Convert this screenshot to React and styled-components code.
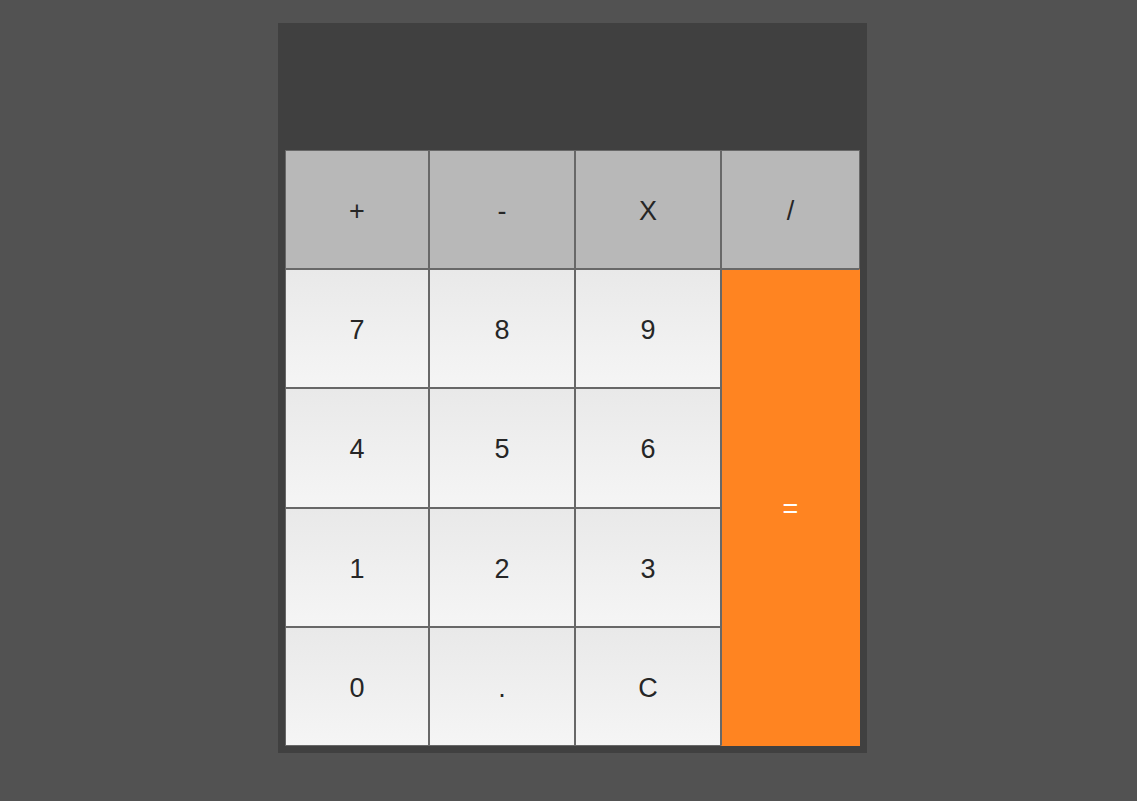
import React from 'react'
import styled, { createGlobalStyle } from 'styled-components'

const GlobalStyle = createGlobalStyle`
  html, body {
    margin: 0;
    padding: 0;
    background: #525252;
    height: 100%;
  }
  body {
    font-family: "Liberation Sans", Arial, sans-serif;
  }
`

const Page = styled.div`
  min-height: 801px;
  padding: 23px 0 0 278px;
  box-sizing: border-box;
`

const Calculator = styled.div`
  width: 589px;
  background: #404040;
  padding: 0 7px 7px;
  box-sizing: border-box;
`

const Display = styled.div`
  height: 127px;
  color: #fff;
  font-size: 40px;
  text-align: right;
`

const Keys = styled.div`
  display: grid;
  grid-template-columns: 144px 146px 146px 139px;
  grid-template-rows: repeat(5, 1fr);
  height: 596px;
`

const Key = styled.button`
  border: 1px solid #686868;
  margin: 0;
  padding: 4px 0 0;
  font-family: inherit;
  font-size: 27px;
  color: #262626;
  background: linear-gradient(#e9e9e9, #f5f5f5);
  cursor: pointer;
  display: flex;
  align-items: center;
  justify-content: center;
  outline: none;
`

const OpKey = styled(Key)`
  background: #b8b8b8;
`

const EqualsKey = styled(Key)`
  grid-column: 4;
  grid-row: 2 / span 4;
  background: #ff8421;
  color: #fff;
  font-weight: 300;
  border-color: #ff8421;
  border-left-color: #686868;
  border-top-color: #686868;
`

const ops = ['+', '-', 'X', '/']
const rows = [
  ['7', '8', '9'],
  ['4', '5', '6'],
  ['1', '2', '3'],
  ['0', '.', 'C'],
]

const App = () => (
  <>
    <GlobalStyle />
    <Page>
      <Calculator>
        <Display />
        <Keys>
          {ops.map((op) => (
            <OpKey key={op}>{op}</OpKey>
          ))}
          {rows.map((row, i) =>
            row.map((k, j) => (
              <Key key={k} style={{ gridRow: i + 2, gridColumn: j + 1 }}>
                {k}
              </Key>
            ))
          )}
          <EqualsKey>=</EqualsKey>
        </Keys>
      </Calculator>
    </Page>
  </>
)

export default App
